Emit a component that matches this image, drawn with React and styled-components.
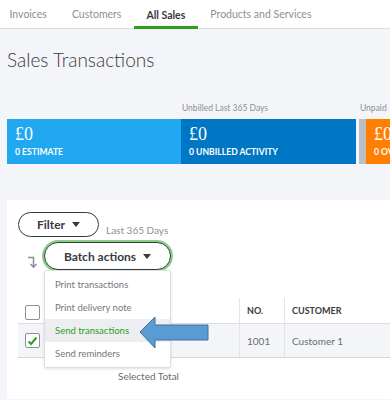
import React from "react";
import styled, { createGlobalStyle } from "styled-components";

const GlobalStyle = createGlobalStyle`
    html, body {
      margin: 0;
      padding: 0;
      background: #f4f5f8;
      font-family: Lato, "Open Sans", sans-serif;
      color: #393a3d;
    }
    body {
      width: 390px;
      height: 400px;
      overflow: hidden;
    }
`;

const Page = styled.div`
    width: 390px;
    height: 400px;
    overflow: hidden;
`;

const TabBar = styled.nav`
    height: 28px;
    background: #fff;
    border-bottom: 1px solid #dcdee3;
    display: flex;
    align-items: stretch;
`;

const TabList = styled.ul`
    display: flex;
    margin: 0 0 0 -3px;
    padding: 0;
    list-style: none;
`;

const Tab = styled.li`
    position: relative;
    padding: 0 12.5px;
    display: flex;
    align-items: center;
    font-size: 10.5px;
    font-weight: ${props => props.active ? 700 : 400};
    color: ${props => props.active ? '#393a3d' : '#8d9096'};
    white-space: nowrap;
    box-shadow: ${props => props.active ? 'inset 0 -3px 0 #2ca01c' : 'none'};
    top: ${props => props.active ? '1px' : '0'};
`;

const Title = styled.h1`
    margin: 0;
    padding: 19px 7px 0 7px;
    height: 47px;
    font-size: 19px;
    font-weight: 300;
    color: #393a3d;
`;

const Summary = styled.div`
    display: grid;
    grid-template-columns: 174px 175px 200px;
    grid-template-rows: 23px 45px;
    margin-left: 7px;
    height: 104px;
    margin-top: 1px;
`;

const Label = styled.div`
    font-size: 8.5px;
    color: #8d9096;
    align-self: center;
    padding-left: ${props => props.shift || 1}px;
    white-space: nowrap;
`;

const Card = styled.div`
    background: ${props => props.color};
    color: #fff;
    padding: 5px 8px;
    box-sizing: border-box;
    display: flex;
    flex-direction: column;
    flex: 1;
`;

const Split = styled.div`
    display: flex;
    margin-left: 3px;
`;

const Stripe = styled.div`
    width: 7px;
    background: #babec5;
`;

const Amount = styled.div`
    font-family: "Liberation Serif", serif;
    font-size: 18px;
    line-height: 20px;
`;

const CardLabel = styled.div`
    font-size: 8.6px;
    font-weight: 700;
    margin-top: 3px;
    white-space: nowrap;
`;

const Panel = styled.section`
    position: relative;
    background: #fff;
    margin-left: 7px;
    padding: 12px 0 0 11px;
    height: 199px;
    box-sizing: border-box;
`;

const FilterRow = styled.div`
    display: flex;
    align-items: flex-end;
    gap: 7px;
`;

const PillButton = styled.button`
    display: flex;
    align-items: center;
    justify-content: center;
    gap: 7px;
    box-sizing: border-box;
    width: ${props => props.width}px;
    height: ${props => props.height}px;
    border: 1.5px solid #393a3d;
    border-radius: 14px;
    background: #fff;
    font-family: inherit;
    font-size: 12px;
    font-weight: 700;
    color: #393a3d;
    padding: 0;
    box-shadow: ${props => props.focused ? '0 0 0 2px #89cf85' : 'none'};
`;

const Caret = styled.span`
    width: 0;
    height: 0;
    border-left: 4px solid transparent;
    border-right: 4px solid transparent;
    border-top: 5px solid #393a3d;
`;

const Hint = styled.span`
    font-size: 10px;
    color: #8d9096;
    padding-bottom: 1px;
`;

const BatchRow = styled.div`
    display: flex;
    align-items: flex-end;
    gap: 5px;
    margin-top: 5px;
    padding-left: 9px;
`;

const SortIcon = styled.svg`
    margin-bottom: 1px;
`;

const Menu = styled.ul`
    position: absolute;
    left: 37px;
    top: 70px;
    width: 125px;
    margin: 0;
    padding: 2px 0;
    list-style: none;
    background: #fff;
    border: 1px solid #dcdee3;
    border-radius: 2px;
    box-shadow: 0 1px 3px rgba(0, 0, 0, 0.12);
    z-index: 5;
`;

const MenuItem = styled.li`
    height: 23px;
    display: flex;
    align-items: center;
    padding-left: 10px;
    font-size: 9.5px;
    color: ${props => props.active ? '#2ca01c' : '#75767c'};
    background: ${props => props.active ? '#eceef1' : 'transparent'};
`;

const Table = styled.div`
    margin-top: 28px;
    width: 380px;
`;

const Row = styled.div`
    display: grid;
    grid-template-columns: 221px 45px 1fr;
    height: ${props => props.head ? 25 : 33}px;
    background: ${props => props.head ? '#fff' : '#f4f5f8'};
    border-bottom: ${props => props.head ? '1px solid #dcdee3' : '1.5px solid #d4d7dc'};
`;

const Cell = styled.div`
    display: flex;
    align-items: center;
    padding-left: 7px;
    border-left: ${props => props.first ? 'none' : '1px solid #e3e5e8'};
    font-size: ${props => props.head ? 9 : 10}px;
    font-weight: ${props => props.head ? 700 : 400};
    color: ${props => props.head ? '#393a3d' : '#6b6c72'};
    white-space: nowrap;
`;

const Checkbox = styled.span`
    display: flex;
    align-items: center;
    justify-content: center;
    width: 13px;
    height: 13px;
    border: 1px solid #8d9096;
    border-radius: 2px;
    background: #fff;
    margin-top: ${props => props.offset || 0}px;
`;

const Total = styled.div`
    font-size: 10px;
    color: #6b6c72;
    padding: 12px 0 0 100px;
`;

const Pointer = styled.svg`
    position: absolute;
    left: 132px;
    top: 115px;
    z-index: 6;
`;

const ArrowPointer = () => (
    <Pointer width="72" height="36" viewBox="0 0 72 36">
        <polygon
            points="1,17 16,2 16,10 69,10 69,25 16,25 16,33"
            fill="#5b9bd5"
            stroke="#41719c"
            strokeWidth="1"
        />
    </Pointer>
);

const tabs = ["Invoices", "Customers", "All Sales", "Products and Services"];
const actions = ["Print transactions", "Print delivery note", "Send transactions", "Send reminders"];

const App = () => (
    <Page>
        <GlobalStyle />
        <TabBar>
            <TabList>
                {tabs.map(t => (
                    <Tab key={t} active={t === "All Sales"}>{t}</Tab>
                ))}
            </TabList>
        </TabBar>

        <Title>Sales Transactions</Title>

        <Summary>
            <div />
            <Label>Unbilled Last 365 Days</Label>
            <Label shift={4}>Unpaid</Label>
            <Card color="#21a8f1">
                <Amount>£0</Amount>
                <CardLabel>0 ESTIMATE</CardLabel>
            </Card>
            <Card color="#0077c5">
                <Amount>£0</Amount>
                <CardLabel>0 UNBILLED ACTIVITY</CardLabel>
            </Card>
            <Split>
                <Stripe />
                <Card color="#ff8000">
                    <Amount>£0</Amount>
                    <CardLabel>0 OVERDUE</CardLabel>
                </Card>
            </Split>
        </Summary>

        <Panel>
            <FilterRow>
                <PillButton width={81} height={25}>Filter <Caret /></PillButton>
                <Hint>Last 365 Days</Hint>
            </FilterRow>
            <BatchRow>
                <SortIcon width="12" height="13" viewBox="0 0 12 13">
                    <path d="M1 1.5 H6.5 V11 M3.5 8 L6.5 11.2 L9.5 8" fill="none" stroke="#8d9096" strokeWidth="1.5" />
                </SortIcon>
                <PillButton width={127} height={28} focused>Batch actions <Caret /></PillButton>
            </BatchRow>

            <Menu>
                {actions.map(a => (
                    <MenuItem key={a} active={a === "Send transactions"}>{a}</MenuItem>
                ))}
            </Menu>
            <ArrowPointer />

            <Table>
                <Row head>
                    <Cell first><Checkbox offset={4} /></Cell>
                    <Cell head>NO.</Cell>
                    <Cell head>CUSTOMER</Cell>
                </Row>
                <Row>
                    <Cell first>
                        <Checkbox>
                            <svg width="11" height="10" viewBox="0 0 11 10">
                                <path d="M1.5 5.5 L4 8 L9.5 1.5" fill="none" stroke="#2ca01c" strokeWidth="2" />
                            </svg>
                        </Checkbox>
                    </Cell>
                    <Cell>1001</Cell>
                    <Cell>Customer 1</Cell>
                </Row>
            </Table>
            <Total>Selected Total</Total>
        </Panel>
    </Page>
);

export default App;
